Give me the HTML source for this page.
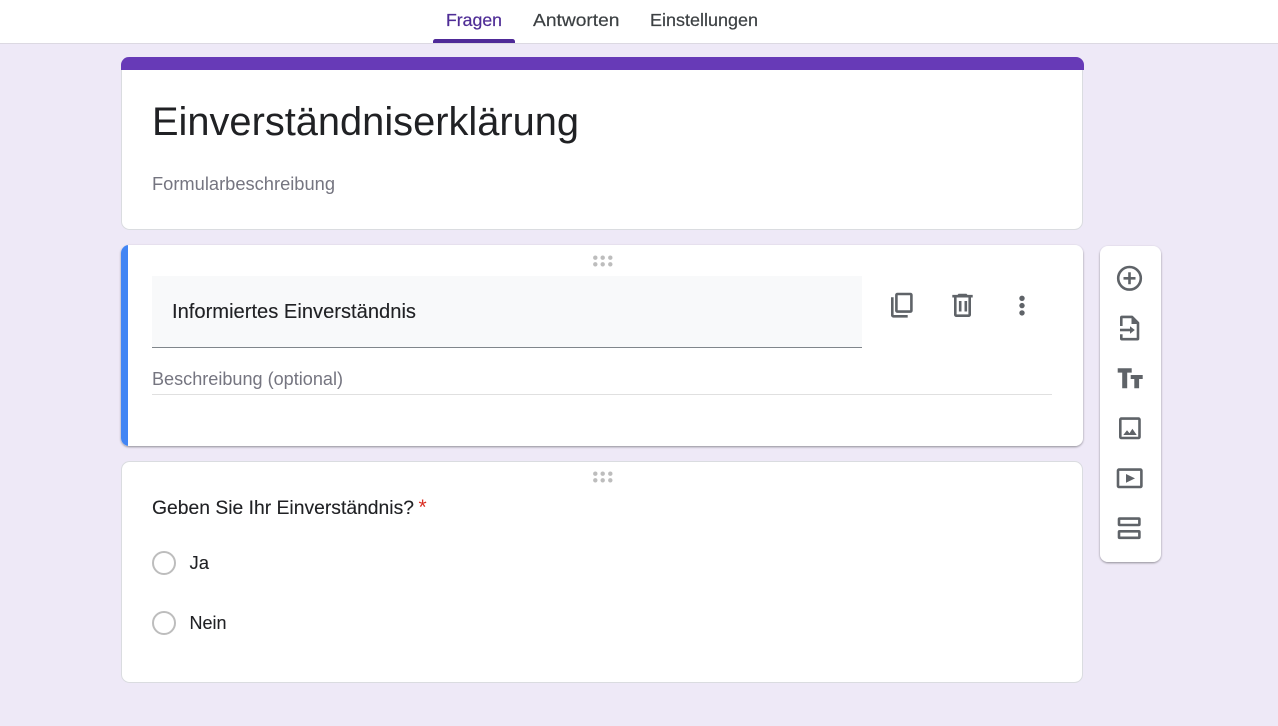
<!DOCTYPE html>
<html lang="de">
<head>
<meta charset="utf-8">
<title>Einverständniserklärung</title>
<style>
html,body{margin:0;padding:0;width:1278px;height:726px;overflow:hidden;background:#eee9f7}
svg{display:block}
text{font-family:"Liberation Sans",sans-serif}
</style>
</head>
<body>
<svg xmlns="http://www.w3.org/2000/svg" width="1278" height="726" viewBox="0 0 1278 726">
<defs>
<filter id="sh" x="-5%" y="-5%" width="110%" height="112%"><feDropShadow dx="0" dy="1" stdDeviation="1" flood-color="#000" flood-opacity=".4"/></filter>
<clipPath id="c1"><rect x="121" y="57" width="963" height="40" rx="8"/></clipPath>
<clipPath id="c2"><rect x="121" y="245" width="962" height="201" rx="8"/></clipPath>
</defs>
<rect width="1278" height="726" fill="#eee9f7"/>
<!-- nav -->
<rect width="1278" height="43.500" fill="#fff"/>
<rect y="43" width="1278" height="1" fill="#dcd9e2"/>
<path d="M433 43v-1.500a2.500 2.500 0 0 1 2.500-2.500h77a2.500 2.500 0 0 1 2.500 2.500V43z" fill="#4f2a98"/>
<text x="446" y="26" font-size="17.500" fill="#4f2d96" stroke="#4f2d96" stroke-width=".2" textLength="56" lengthAdjust="spacingAndGlyphs">Fragen</text>
<text x="533" y="26" font-size="17.500" fill="#3c4043" stroke="#3c4043" stroke-width=".2" textLength="86.500" lengthAdjust="spacingAndGlyphs">Antworten</text>
<text x="650" y="26" font-size="17.500" fill="#3c4043" stroke="#3c4043" stroke-width=".2" textLength="108" lengthAdjust="spacingAndGlyphs">Einstellungen</text>
<!-- title card -->
<rect x="121.500" y="57.500" width="961" height="172" rx="8" fill="#fff" stroke="#dadce0"/>
<rect x="121" y="57" width="963" height="13" fill="#673ab7" clip-path="url(#c1)"/>
<text x="152" y="135" font-size="40" fill="#202124" textLength="427" lengthAdjust="spacingAndGlyphs">Einverständniserklärung</text>
<text x="152" y="190" font-size="18.500" fill="#757580" textLength="183" lengthAdjust="spacingAndGlyphs">Formularbeschreibung</text>
<!-- section card -->
<rect x="121" y="245" width="962" height="201" rx="8" fill="#fff" filter="url(#sh)"/>
<rect x="121" y="245" width="7" height="201" fill="#4285f4" clip-path="url(#c2)"/>
<g fill="#bdbdbd">
<circle cx="595.300" cy="257.700" r="2.200"/><circle cx="602.700" cy="257.700" r="2.200"/><circle cx="610.300" cy="257.700" r="2.200"/>
<circle cx="595.300" cy="264.300" r="2.200"/><circle cx="602.700" cy="264.300" r="2.200"/><circle cx="610.300" cy="264.300" r="2.200"/>
</g>
<rect x="152" y="276" width="710" height="71" fill="#f8f9fa"/>
<rect x="152" y="347" width="710" height="1" fill="#80868b"/>
<text x="172" y="318" font-size="20.500" fill="#202124" stroke="#202124" stroke-width=".12" textLength="244" lengthAdjust="spacingAndGlyphs">Informiertes Einverständnis</text>
<text x="152" y="385" font-size="18.500" fill="#757580" textLength="191" lengthAdjust="spacingAndGlyphs">Beschreibung (optional)</text>
<rect x="152" y="394" width="900" height="1" fill="#e0e0e0"/>
<!-- section icons -->
<g fill="none" stroke="#5f6368" stroke-width="2.600" stroke-linejoin="round">
<rect x="896.400" y="294" width="15" height="17.600" rx="1"/>
<path d="M892.300 297.300v18a1 1 0 0 0 1 1h14.400"/>
<path d="M955.300 297v17.700a1 1 0 0 0 1 1h12.400a1 1 0 0 0 1-1V297"/>
<path d="M952.300 296.200h20.400"/>
<path d="M960.200 301v10.500M965.800 301v10.500"/>
</g>
<path d="M957.500 295l1-1.300h8l1 1.300z" fill="#5f6368"/>
<g fill="#5f6368"><circle cx="1022" cy="298.300" r="2.700"/><circle cx="1022" cy="305.600" r="2.700"/><circle cx="1022" cy="312.900" r="2.700"/></g>
<!-- question card -->
<rect x="121.500" y="461.500" width="961" height="221" rx="8" fill="#fff" stroke="#dadce0"/>
<g fill="#bdbdbd">
<circle cx="595.300" cy="473.700" r="2.200"/><circle cx="602.700" cy="473.700" r="2.200"/><circle cx="610.300" cy="473.700" r="2.200"/>
<circle cx="595.300" cy="480.300" r="2.200"/><circle cx="602.700" cy="480.300" r="2.200"/><circle cx="610.300" cy="480.300" r="2.200"/>
</g>
<text x="152" y="514" font-size="19.500" fill="#202124" stroke="#202124" stroke-width=".12" textLength="262" lengthAdjust="spacingAndGlyphs">Geben Sie Ihr Einverständnis?</text>
<text x="418.500" y="514" font-size="21" fill="#d93025">*</text>
<circle cx="164" cy="563" r="11" fill="none" stroke="#bdbdbd" stroke-width="2"/>
<text x="189.500" y="569" font-size="18" fill="#202124" stroke="#202124" stroke-width=".1" textLength="19.500" lengthAdjust="spacingAndGlyphs">Ja</text>
<circle cx="164" cy="623" r="11" fill="none" stroke="#bdbdbd" stroke-width="2"/>
<text x="189.500" y="629" font-size="18" fill="#202124" stroke="#202124" stroke-width=".1" textLength="37" lengthAdjust="spacingAndGlyphs">Nein</text>
<!-- side toolbar -->
<rect x="1100" y="246" width="61" height="316" rx="8" fill="#fff" filter="url(#sh)"/>
<g fill="none" stroke="#5f6368" stroke-width="2.600" stroke-linejoin="round">
<circle cx="1129.500" cy="278.300" r="11.300"/>
<path d="M1129.500 272.300v12M1123.500 278.300h12"/>
<path d="M1121.300 326v-8.500a.6.6 0 0 1 .6-.6h10.100l6 6v15.700a.6.6 0 0 1-.6.6h-15.500a.6.6 0 0 1-.6-.6v-4.300"/>
<path d="M1120 330h11"/>
<rect x="1120.300" y="418.600" width="19.200" height="19.400" rx="1"/>
<rect x="1118" y="469.600" width="23.400" height="17.400" rx="1"/>
<rect x="1119" y="518.600" width="20.400" height="6.400" rx=".6"/>
<rect x="1119" y="531.300" width="20.400" height="6.500" rx=".6"/>
</g>
<g fill="#5f6368">
<path d="M1131.500 316.500v7.500h7z"/>
<path d="M1130 326.200l4.800 3.800-4.800 3.800z"/>
<path d="M1117.700 368.300h14v4.300h-4.500v15.700h-5v-15.700h-4.500z"/>
<path d="M1130.700 375h12v4h-3.600v9.300h-4.800v-9.300h-3.600z"/>
<path d="M1123.300 435l3.700-4.700 2.500 3 2.900-4.500 4.300 6.200z"/>
<path d="M1126 474l9 4.400-9 4.400z"/>
</g>
</svg>
</body>
</html>
